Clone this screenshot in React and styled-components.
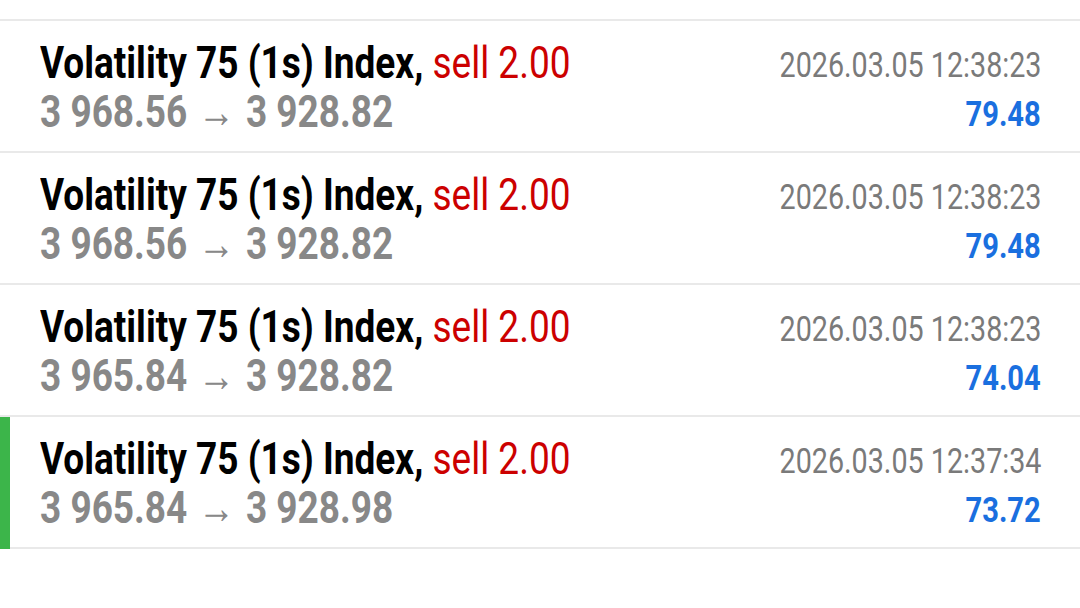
import React from "react";
import styled, { createGlobalStyle } from "styled-components";

const Global = createGlobalStyle`
  html, body { margin: 0; padding: 0; background: #ffffff; }
  body { font-family: Roboto, "Liberation Sans", sans-serif; }
`;

const List = styled.div`
  padding-top: 19px;
  width: 1080px;
`;

const Row = styled.div`
  position: relative;
  display: flex;
  justify-content: space-between;
  height: 130px;
  border-top: 2px solid #e9e9e9;
  padding: 0 39px 0 40px;
  box-sizing: content-box;
  &:last-child { border-bottom: 2px solid #e9e9e9; }
`;

const Marker = styled.div`
  position: absolute;
  left: 0;
  top: 0;
  bottom: ${(p) => (p.$last ? "-2px" : "0")};
  width: 10px;
  background: #3cb54a;
`;

const Col = styled.div`
  display: flex;
  flex-direction: column;
  align-items: ${(p) => (p.$right ? "flex-end" : "flex-start")};
  padding-top: ${(p) => (p.$right ? "20px" : "17px")};
`;

const Line = styled.div`
  font-size: ${(p) => p.$size}px;
  line-height: 49px;
  font-weight: ${(p) => (p.$bold ? 700 : 400)};
  color: ${(p) => p.$color};
  white-space: nowrap;
  transform: scaleX(${(p) => p.$sx});
  transform-origin: ${(p) => (p.$right ? "right" : "left")} center;
`;

const Sell = styled.span`
  color: #cc0000;
  font-weight: 400;
`;

const Arrow = styled.span`
  margin: 0 2px;
`;

const rows = [
  { open: "3 968.56", close: "3 928.82", time: "2026.03.05 12:38:23", profit: "79.48" },
  { open: "3 968.56", close: "3 928.82", time: "2026.03.05 12:38:23", profit: "79.48" },
  { open: "3 965.84", close: "3 928.82", time: "2026.03.05 12:38:23", profit: "74.04" },
  { open: "3 965.84", close: "3 928.98", time: "2026.03.05 12:37:34", profit: "73.72", active: true },
];

export default function App() {
  return (
    <>
      <Global />
      <List>
        {rows.map((r, i) => (
          <Row key={i}>
            {r.active && <Marker $last={i === rows.length - 1} />}
            <Col>
              <Line $size={45} $bold $color="#000" $sx={0.822}>
                Volatility 75 (1s) Index, <Sell>sell 2.00</Sell>
              </Line>
              <Line $size={45} $bold $color="#888888" $sx={0.822}>
                {r.open} <Arrow>→</Arrow> {r.close}
              </Line>
            </Col>
            <Col $right>
              <Line $right $size={35} $color="#7a7a7a" $sx={0.82}>
                {r.time}
              </Line>
              <Line $right $size={35.5} $bold $color="#1a6fdf" $sx={0.82}>
                {r.profit}
              </Line>
            </Col>
          </Row>
        ))}
      </List>
    </>
  );
}
